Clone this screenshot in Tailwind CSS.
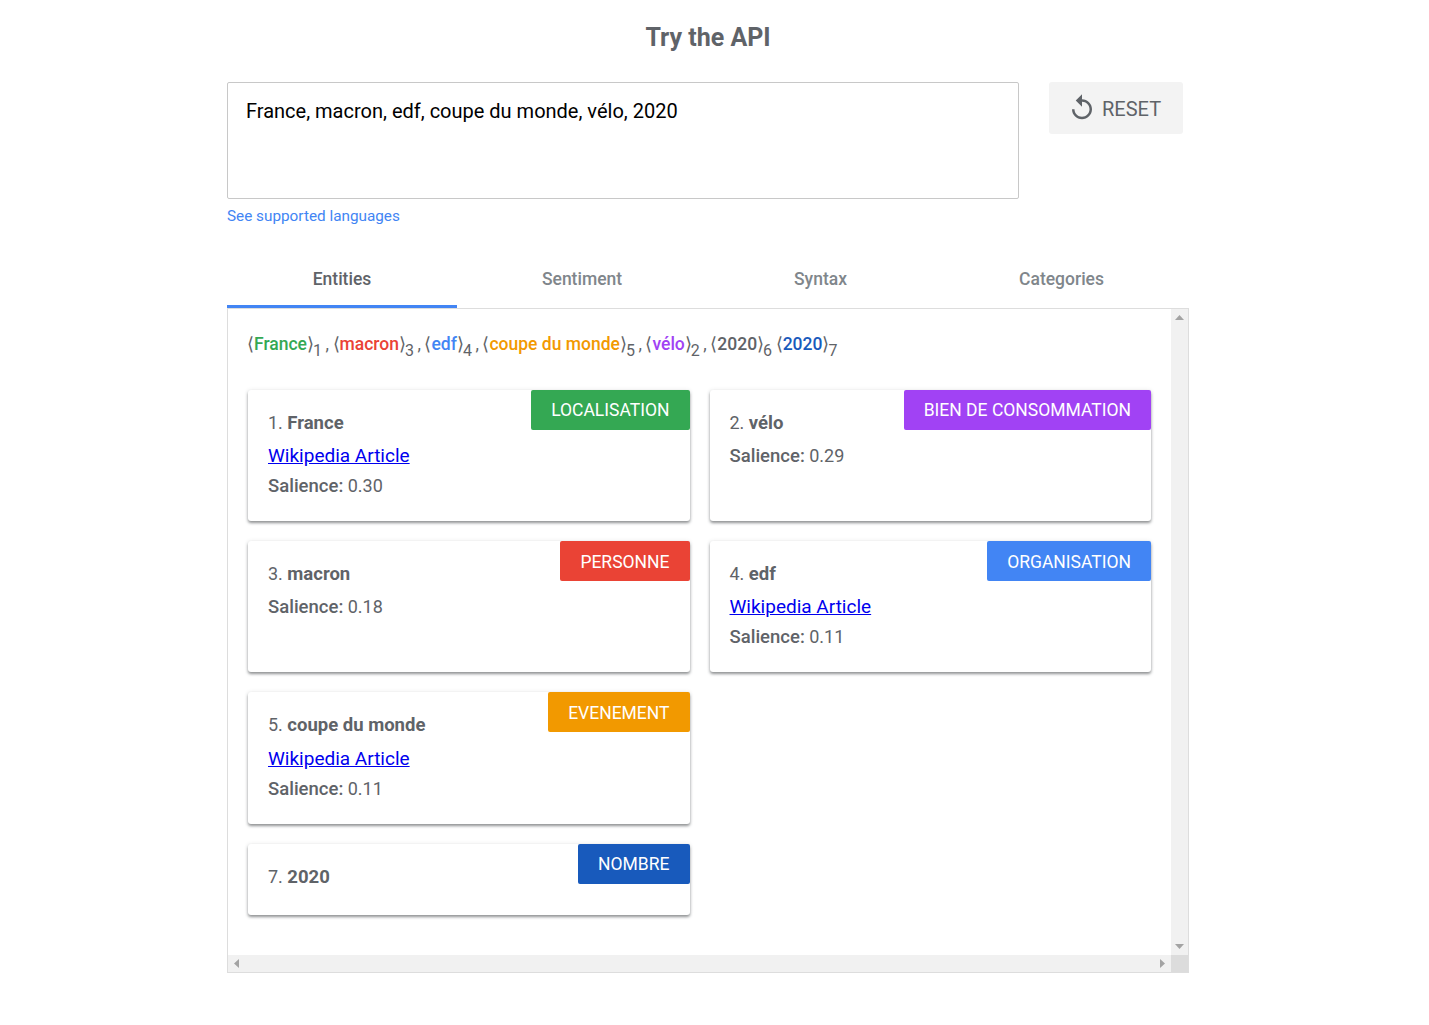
<!DOCTYPE html>
<html lang="en">
    <head>
        <title>Try the API</title>
        <meta charset="utf-8">
        <script src="https://cdn.jsdelivr.net/npm/@tailwindcss/browser@4"></script>
    </head>
    <body class="bg-white font-['Roboto',sans-serif] text-[#5f6368]">
        <div class="w-[962px] ml-[227px]">
            <h2 class="pt-[22px] h-[82px] text-center text-[25px] leading-[32px] font-bold">Try the API</h2>

            <div class="flex items-start">
                <div class="w-[792px] h-[117px] border border-[#c8c8c8] rounded-[2px] px-[18px] py-[15px] text-[20px] leading-[26px] text-black">France, macron, edf, coupe du monde, vélo, 2020</div>
                <button class="ml-[30px] w-[134px] h-[52px] bg-[#f3f3f3] rounded-[3px] flex items-center pl-[18px] text-[20px] text-[#5f6368]">
                    <svg class="w-[30px] h-[30px] fill-[#5f6368]" viewBox="0 0 24 24"><path d="M12 5V1L7 6l5 5V7c3.31 0 6 2.69 6 6s-2.69 6-6 6-6-2.69-6-6H4c0 4.42 3.58 8 8 8s8-3.58 8-8-3.58-8-8-8z"/></svg>
                    <span class="ml-[5px] pt-[1px]">RESET</span>
                </button>
            </div>
            <a class="block mt-[7px] h-[20px] text-[15.3px] leading-[20px] text-[#4285f4]">See supported languages</a>

            <!-- tabs -->
            <div class="mt-[24px] h-[59px] flex border-b border-[#ddd] text-[17.5px] font-medium text-[#80868b]">
                <div class="w-[230px] h-[58px] border-b-[3px] border-[#4285f4] text-[#5f6368] flex justify-center pt-[16px]">Entities</div>
                <div class="w-[250px] flex justify-center pt-[16px]">Sentiment</div>
                <div class="w-[227px] flex justify-center pt-[16px]">Syntax</div>
                <div class="w-[255px] flex justify-center pt-[16px]">Categories</div>
            </div>

            <div class="h-[664px] border-x border-b border-[#ddd] flex flex-col">
                <div class="flex flex-1 min-h-0">
                    <div class="flex-1 pl-[20px] pr-[20px]">
                        <div class="pt-[22px] -ml-[1px] h-[81px] text-[17.5px] leading-[26px] whitespace-nowrap [word-spacing:-0.8px]">
                            ⟨<span class="font-medium text-[#34a853]">France</span><span class="tracking-[-1px]">⟩</span><sub class="text-[16px] -bottom-[6px]">1</sub> ,
                            ⟨<span class="font-medium text-[#ea4335]">macron</span><span class="tracking-[-1px]">⟩</span><sub class="text-[16px] -bottom-[6px]">3</sub> ,
                            ⟨<span class="font-medium text-[#4285f4]">edf</span><span class="tracking-[-1px]">⟩</span><sub class="text-[16px] -bottom-[6px]">4</sub> ,
                            ⟨<span class="font-medium text-[#f29900] [word-spacing:0px]">coupe du monde</span><span class="tracking-[-1px]">⟩</span><sub class="text-[16px] -bottom-[6px]">5</sub> ,
                            ⟨<span class="font-medium text-[#a142f4]">vélo</span><span class="tracking-[-1px]">⟩</span><sub class="text-[16px] -bottom-[6px]">2</sub> ,
                            ⟨<span class="font-medium">2020</span><span class="tracking-[-1px]">⟩</span><sub class="text-[16px] -bottom-[6px]">6</sub>
                            ⟨<span class="font-medium text-[#185abc]">2020</span><span class="tracking-[-1px]">⟩</span><sub class="text-[16px] -bottom-[6px]">7</sub>
                        </div>

                        <div class="grid grid-cols-2 gap-x-[20px] gap-y-[20px] w-[903px] text-[18px] leading-[24px]">
                            <div class="relative h-[131px] rounded-[3px] bg-white shadow-[0_2px_3px_rgba(60,64,67,0.55),0_0_4px_rgba(60,64,67,0.1)] px-[20px] pt-[21px]">
                                <span class="absolute top-0 right-0 h-[40px] px-[20px] flex items-center rounded-[2px] bg-[#34a853] text-white text-[17.5px]">LOCALISATION</span>
                                <div>1. <b class="font-bold text-[18.5px]">France</b></div>
                                <a class="block mt-[9px] text-[19px] text-[#0000ee] underline">Wikipedia Article</a>
                                <div class="mt-[6px]"><span class="font-medium text-[18.5px]">Salience:</span> 0.30</div>
                            </div>
                            <div class="relative h-[131px] rounded-[3px] bg-white shadow-[0_2px_3px_rgba(60,64,67,0.55),0_0_4px_rgba(60,64,67,0.1)] px-[20px] pt-[21px]">
                                <span class="absolute top-0 right-0 h-[40px] px-[20px] flex items-center rounded-[2px] bg-[#a142f4] text-white text-[17.5px]">BIEN DE CONSOMMATION</span>
                                <div>2. <b class="font-bold text-[18.5px]">vélo</b></div>
                                <div class="mt-[9px]"><span class="font-medium text-[18.5px]">Salience:</span> 0.29</div>
                            </div>
                            <div class="relative h-[131px] rounded-[3px] bg-white shadow-[0_2px_3px_rgba(60,64,67,0.55),0_0_4px_rgba(60,64,67,0.1)] px-[20px] pt-[21px]">
                                <span class="absolute top-0 right-0 h-[40px] px-[20px] pt-[2px] flex items-center rounded-[2px] bg-[#ea4335] text-white text-[17.5px]">PERSONNE</span>
                                <div>3. <b class="font-bold text-[18.5px]">macron</b></div>
                                <div class="mt-[9px]"><span class="font-medium text-[18.5px]">Salience:</span> 0.18</div>
                            </div>
                            <div class="relative h-[131px] rounded-[3px] bg-white shadow-[0_2px_3px_rgba(60,64,67,0.55),0_0_4px_rgba(60,64,67,0.1)] px-[20px] pt-[21px]">
                                <span class="absolute top-0 right-0 h-[40px] px-[20px] pt-[2px] flex items-center rounded-[2px] bg-[#4285f4] text-white text-[17.5px]">ORGANISATION</span>
                                <div>4. <b class="font-bold text-[18.5px]">edf</b></div>
                                <a class="block mt-[9px] text-[19px] text-[#0000ee] underline">Wikipedia Article</a>
                                <div class="mt-[6px]"><span class="font-medium text-[18.5px]">Salience:</span> 0.11</div>
                            </div>
                            <div class="relative h-[132px] rounded-[3px] bg-white shadow-[0_2px_3px_rgba(60,64,67,0.55),0_0_4px_rgba(60,64,67,0.1)] px-[20px] pt-[21px]">
                                <span class="absolute top-0 right-0 h-[40px] px-[20px] pt-[2px] flex items-center rounded-[2px] bg-[#f29900] text-white text-[17.5px]">EVENEMENT</span>
                                <div>5. <b class="font-bold text-[18.5px]">coupe du monde</b></div>
                                <a class="block mt-[10px] text-[19px] text-[#0000ee] underline">Wikipedia Article</a>
                                <div class="mt-[6px]"><span class="font-medium text-[18.5px]">Salience:</span> 0.11</div>
                            </div>
                            <div></div>
                            <div class="relative h-[71px] rounded-[3px] bg-white shadow-[0_2px_3px_rgba(60,64,67,0.55),0_0_4px_rgba(60,64,67,0.1)] px-[20px] pt-[21px]">
                                <span class="absolute top-0 right-0 h-[40px] px-[20px] flex items-center rounded-[2px] bg-[#185abc] text-white text-[17.5px]">NOMBRE</span>
                                <div>7. <b class="font-bold text-[18.5px]">2020</b></div>
                            </div>
                        </div>
                    </div>
                    <!-- vertical scrollbar -->
                    <div class="w-[17px] bg-[#f1f1f1] flex flex-col justify-between items-center py-[6px]">
                        <svg class="w-[9px] h-[5px] fill-[#a3a3a3]" viewBox="0 0 9 5"><path d="M4.5 0 9 5H0z"/></svg>
                        <svg class="w-[9px] h-[5px] fill-[#a3a3a3]" viewBox="0 0 9 5"><path d="M0 0h9L4.5 5z"/></svg>
                    </div>
                </div>
                <!-- horizontal scrollbar -->
                <div class="h-[17px] flex shrink-0">
                    <div class="flex-1 bg-[#f1f1f1] flex justify-between items-center px-[6px]">
                        <svg class="w-[5px] h-[9px] fill-[#a3a3a3]" viewBox="0 0 5 9"><path d="M0 4.5 5 0v9z"/></svg>
                        <svg class="w-[5px] h-[9px] fill-[#a3a3a3]" viewBox="0 0 5 9"><path d="M5 4.5 0 0v9z"/></svg>
                    </div>
                    <div class="w-[17px] bg-[#dcdcdc]"></div>
                </div>
            </div>
        </div>
    </body>
</html>
